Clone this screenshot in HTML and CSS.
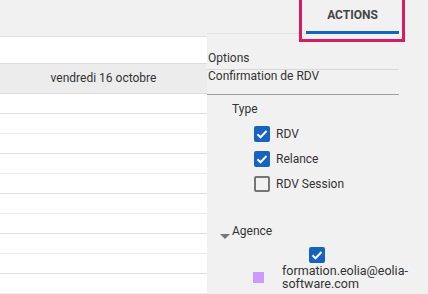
FILE: index.html
```html
<!DOCTYPE html>
<html>
<head>
  <meta charset="UTF-8">
  <meta name="viewport" content="width=device-width, initial-scale=1.0">
  <link rel="stylesheet" href="styles.css">
</head>
<body>
<div class="app">

  <div class="calendar">
    <div class="cal-top"></div>
    <div class="cal-head">vendredi 16 octobre</div>
    <div class="cal-rows">
      <div class="slot"></div>
      <div class="slot half"></div>
      <div class="slot"></div>
      <div class="slot half"></div>
      <div class="slot"></div>
      <div class="slot half"></div>
      <div class="slot"></div>
      <div class="slot half"></div>
      <div class="slot"></div>
      <div class="slot half"></div>
    </div>
  </div>

  <div class="side">
    <div class="tabs">
      <div class="tab active">ACTIONS</div>
      <div class="highlight"></div>
    </div>

    <div class="menu">
      <div class="menu-title">Options</div>
      <div class="menu-item">Confirmation de RDV</div>
    </div>

    <div class="group type">
      <div class="group-title">Type</div>
      <label class="check-row"><span class="box checked"><svg viewBox="0 0 16 16"><path d="M3.5 8.2l3 3 6-6.2" /></svg></span>RDV</label>
      <label class="check-row"><span class="box checked"><svg viewBox="0 0 16 16"><path d="M3.5 8.2l3 3 6-6.2" /></svg></span>Relance</label>
      <label class="check-row"><span class="box"></span>RDV Session</label>
    </div>

    <div class="group agence">
      <div class="group-title"><span class="caret"></span>Agence</div>
      <div class="all-check"><span class="box checked"><svg viewBox="0 0 16 16"><path d="M3.5 8.2l3 3 6-6.2" /></svg></span></div>
      <div class="agent">
        <span class="swatch"></span>
        <span class="agent-name">formation.eolia@eolia-<br>software.com</span>
      </div>
    </div>
  </div>

</div>
</body>
</html>
```

FILE: styles.css
```css
body {
    margin: 0;
    background: #f1f1f1;
    font-family: Roboto, "Liberation Sans", sans-serif;
    font-size: 12px;
    color: #333;
    overflow: hidden;
}

.app {
    display: flex;
    height: 294px;
}

/* calendar column */
.calendar {
    width: 207px;
    padding-top: 36px;
    display: flex;
    flex-direction: column;
}

.cal-top {
    height: 30px;
    background: #fff;
    border-top: 1px solid #e0e0e0;
}

.cal-head {
    height: 34px;
    background: #ececec;
    border-top: 1px solid #dcdcdc;
    border-bottom: 1px solid #dcdcdc;
    display: flex;
    align-items: center;
    justify-content: center;
    color: #333;
}

.cal-rows {
    background: #fff;
    flex: 1;
}

.slot {
    height: 19px;
    border-bottom: 1px solid #dedede;
}

.slot.half {
    border-bottom-color: #ececec;
}

/* side panel */
.side {
    width: 192px;
}

.tabs {
    position: relative;
    height: 33px;
    border-bottom: 1px solid #e3e3e3;
    display: flex;
    justify-content: flex-end;
}

.tab {
    width: 93px;
    height: 31px;
    line-height: 30px;
    text-align: center;
    font-weight: 700;
    color: #454545;
    border-bottom: 3px solid transparent;
}

.tab.active {
    border-bottom-color: #1565c0;
}

.highlight {
    position: absolute;
    left: 92px;
    top: -4px;
    width: 100px;
    height: 40px;
    border: 3px solid #d81b60;
}

.menu {
    padding-top: 13px;
    border-bottom: 1px solid #9e9e9e;
}

.menu-title {
    height: 22px;
    line-height: 22px;
    padding-left: 1px;
    border-bottom: 1px solid #d9d9d9;
}

.menu-item {
    height: 24px;
    line-height: 13px;
    padding-left: 1px;
}

.group {
    padding-left: 25px;
}

.type {
    padding-top: 2px;
}

.group-title {
    height: 24px;
    line-height: 24px;
}

.check-row {
    display: flex;
    align-items: center;
    height: 25px;
    padding-left: 22px;
    gap: 6px;
}

.box {
    box-sizing: border-box;
    width: 16px;
    height: 16px;
    border: 2px solid #757575;
    border-radius: 2px;
    display: inline-block;
}

.box.checked {
    border: 0;
    background: #1565c0;
}

.box svg {
    display: block;
    width: 16px;
    height: 16px;
    fill: none;
    stroke: #fff;
    stroke-width: 2;
}

.agence {
    padding-top: 23px;
    padding-left: 13px;
}

.agence .group-title {
    display: flex;
    align-items: center;
    height: 24px;
}

.caret {
    width: 0;
    height: 0;
    border-left: 5px solid transparent;
    border-right: 5px solid transparent;
    border-top: 5px solid #777;
    margin-top: 10px;
    margin-right: 2px;
}

.all-check {
    padding-left: 89px;
    padding-top: 4px;
    height: 17px;
}

.agent {
    display: flex;
    align-items: center;
    padding-left: 33px;
    gap: 18px;
    line-height: 13px;
}

.swatch {
    width: 11px;
    height: 11px;
    background: #cc99ff;
    flex: none;
}

.agent-name {
    color: #333;
    font-size: 12.5px;
}
```
